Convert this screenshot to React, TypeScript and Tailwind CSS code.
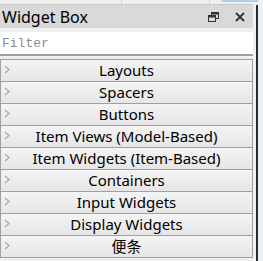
import React from "react";

const rows = [
  "Layouts",
  "Spacers",
  "Buttons",
  "Item Views (Model-Based)",
  "Item Widgets (Item-Based)",
  "Containers",
  "Input Widgets",
  "Display Widgets",
  "便条",
];

function Chevron() {
  return (
    <svg width="6" height="9" viewBox="0 0 6 9" className="shrink-0">
      <path d="M1 1 L5 4.5 L1 8" fill="none" stroke="#a8a8a8" strokeWidth="1.2" />
    </svg>
  );
}

export default function App() {
  return (
    <div
      className="w-[263px] h-[261px] bg-[#f0f0f0] flex flex-col overflow-hidden"
      style={{ fontFamily: '"Noto Sans", "Noto Sans CJK SC", sans-serif' }}
    >
      <div className="h-[4px] flex shrink-0">
        <div className="w-[122px] border-r border-[#d0d0d0]" />
        <div className="w-[88px] border-r border-[#d0d0d0]" />
        <div className="w-[12px]" />
        <div className="w-[36px] h-[2px] bg-[#a9d1f2]" />
      </div>
      <div className="flex flex-1 min-h-0">
        <div className="w-[253px] flex flex-col">
          <div className="h-[24px] bg-[#d9d9d9] border-t border-[#c8c8c8] flex items-center pl-[2px] pr-[8px]">
            <span className="text-[16px] leading-none text-black">Widget Box</span>
            <div className="ml-auto flex items-center gap-[16px]">
              <svg width="11" height="10" viewBox="0 0 11 10">
                <rect x="3.5" y="0.5" width="7" height="6" fill="none" stroke="#333" strokeWidth="1" />
                <rect x="3.5" y="0.5" width="7" height="2" fill="#333" />
                <rect x="0.5" y="3.5" width="7" height="6" fill="#d9d9d9" stroke="#333" strokeWidth="1" />
                <rect x="0.5" y="3.5" width="7" height="2" fill="#333" />
              </svg>
              <svg width="10" height="10" viewBox="0 0 10 10">
                <path d="M1 1 L9 9 M9 1 L1 9" stroke="#333" strokeWidth="1.8" />
              </svg>
            </div>
          </div>
          <div className="h-[4px]" />
          <div className="h-[24px] bg-white border-b-2 border-[#a0a0a0] flex items-center pl-[2px] mr-[-1px]">
            <span
              className="text-[13px] text-[#8c8c8c] leading-none"
              style={{ fontFamily: '"Liberation Mono", monospace' }}
            >
              Filter
            </span>
          </div>
          <div className="h-[3px]" />
          <div className="flex flex-col">
            {rows.map((r) => (
              <div
                key={r}
                className="h-[22px] border border-b-0 border-[#a0a0a0] bg-gradient-to-b from-[#f4f4f4] to-[#e6e6e6] flex items-center relative"
              >
                <div className="absolute left-[3px] top-[5px]">
                  <Chevron />
                </div>
                <span className="flex-1 text-center text-[15px] leading-none text-black">{r}</span>
              </div>
            ))}
            <div className="border-t border-[#a0a0a0]" />
          </div>
        </div>
        <div className="w-[3px] bg-[#f0f0f0]" />
        <div className="w-[2px] bg-[#2b2b2b] mt-[1px]" />
        <div className="w-[5px] bg-[#eef2f6]" />
      </div>
    </div>
  );
}
